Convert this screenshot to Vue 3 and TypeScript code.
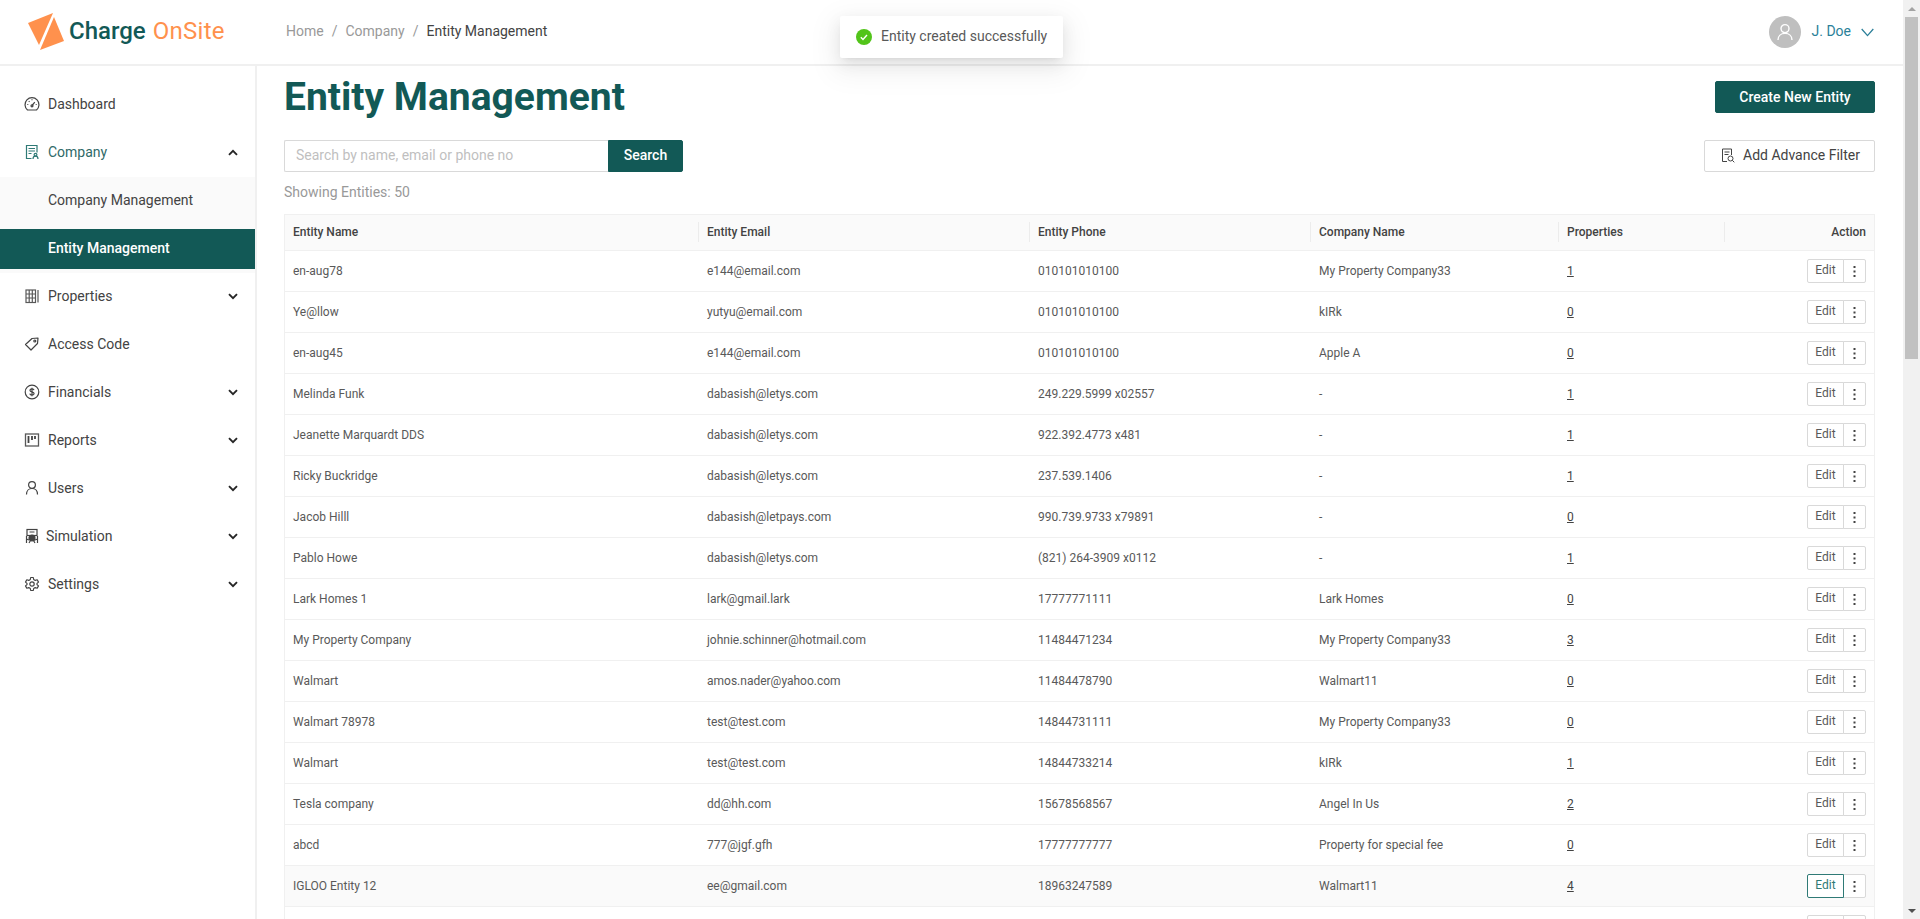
<template>
  <div class="app">
    <div class="page">
      <!-- top bar -->
      <header class="topbar">
        <div class="logo">
          <svg class="logo-mark" width="37" height="40" viewBox="0 0 37 40">
            <polygon points="0,11 25,1 11,33" fill="#ff914d" />
            <polygon points="26,5 36,29 12,38" fill="#ff914d" />
          </svg>
          <span class="logo-text"><b>Charge</b> <i>OnSite</i></span>
        </div>
        <nav class="breadcrumb">
          <span>Home</span><em>/</em><span>Company</span><em>/</em><span class="current">Entity Management</span>
        </nav>
        <div class="user">
          <span class="avatar">
            <svg width="18" height="18" viewBox="0 0 18 18" fill="none" stroke="#fff" stroke-width="1.4">
              <circle cx="9" cy="5.6" r="4" />
              <path d="M2 17c0-4 3-6.600 7-6.600s7 2.600 7 6.600" />
            </svg>
          </span>
          <span class="user-name">J. Doe</span>
          <svg width="13" height="9" viewBox="0 0 13 9" fill="none" stroke="#2b7f99" stroke-width="1.3">
            <path d="M.7 1l5.800 6.600L12.300 1" />
          </svg>
        </div>
      </header>

      <div class="body">
        <!-- side menu -->
        <aside class="sidebar">
          <template v-for="item in menu" :key="item.label">
            <div class="menu-item" :class="{ 'is-open': item.open }">
              <svg class="menu-icon" :class="{ teal: item.open }" width="16" height="16" viewBox="0 0 16 16" fill="none" stroke="currentColor" stroke-width="1.2" v-html="item.icon"></svg>
              <span class="menu-label" :class="{ narrow: item.label === 'Simulation' }">{{ item.label }}</span>
              <svg v-if="item.arrow" class="menu-arrow" :class="{ up: item.open }" width="10" height="7" viewBox="0 0 10 7" fill="none" stroke="#262626" stroke-width="1.9">
                <path d="M1 1.200l4 4 4-4" />
              </svg>
            </div>
            <div v-if="item.open" class="submenu">
              <div class="sub-item">Company Management</div>
              <div class="sub-item active">Entity Management</div>
            </div>
          </template>
        </aside>

        <main class="content">
          <div class="title-row">
            <h1>Entity Management</h1>
            <button class="btn primary create">Create New Entity</button>
          </div>

          <div class="search-row">
            <div class="search">
              <input type="text" placeholder="Search by name, email or phone no" />
              <button class="btn primary">Search</button>
            </div>
            <button class="btn filter">
              <svg width="14" height="15" viewBox="0 0 14 15" fill="none" stroke="#434343" stroke-width="1">
                <path d="M6 13.500H1.500V1h9v6" />
                <path d="M3.500 4h5M3.500 6.500h4" />
                <circle cx="9.500" cy="10.500" r="2.500" />
                <path d="M11.300 12.300l2 2" />
              </svg>
              Add Advance Filter
            </button>
          </div>

          <div class="showing">Showing Entities: 50</div>

          <table class="grid">
            <colgroup>
              <col style="width: 414px" />
              <col style="width: 331px" />
              <col style="width: 281px" />
              <col style="width: 248px" />
              <col style="width: 166px" />
              <col style="width: 150px" />
            </colgroup>
            <thead>
              <tr>
                <th>Entity Name</th>
                <th>Entity Email</th>
                <th>Entity Phone</th>
                <th>Company Name</th>
                <th>Properties</th>
                <th class="action">Action</th>
              </tr>
            </thead>
            <tbody>
              <tr v-for="(row, i) in rows" :key="i" :class="{ hovered: i === 15 }">
                <td>{{ row.name }}</td>
                <td>{{ row.email }}</td>
                <td>{{ row.phone }}</td>
                <td>{{ row.company }}</td>
                <td><a class="count">{{ row.props }}</a></td>
                <td class="action">
                  <div class="edit-group">
                    <button class="edit">Edit</button>
                    <button class="more">
                      <svg width="3" height="11" viewBox="0 0 3 11" fill="#434343">
                        <rect x=".5" y="0" width="2" height="2" />
                        <rect x=".5" y="4.500" width="2" height="2" />
                        <rect x=".5" y="9" width="2" height="2" />
                      </svg>
                    </button>
                  </div>
                </td>
              </tr>
            </tbody>
          </table>
        </main>
      </div>
    </div>

    <!-- scrollbar -->
    <div class="scrollbar">
      <span class="sb-arrow"><i class="tri up"></i></span>
      <span class="sb-thumb"></span>
      <span class="sb-space"></span>
      <span class="sb-arrow"><i class="tri"></i></span>
    </div>

    <!-- toast -->
    <div class="toast">
      <svg width="16" height="16" viewBox="0 0 16 16">
        <circle cx="8" cy="8" r="8" fill="#52c41a" />
        <path d="M4.800 8.200l2.200 2.200 4-4.400" fill="none" stroke="#fff" stroke-width="1.400" />
      </svg>
      <span>Entity created successfully</span>
    </div>
  </div>
</template>

<script setup lang="ts">
interface MenuItem {
  label: string
  icon: string
  arrow?: boolean
  open?: boolean
}

interface EntityRow {
  name: string
  email: string
  phone: string
  company: string
  props: string
}

const menu: MenuItem[] = [
  {
    label: 'Dashboard',
    icon: '<path d="M3.500 14a7 7 0 1 1 9 0z"/><path d="M8 9.500l2.800-3.300M3.300 8.500h1M11.700 8.500h1M8 3.300v1M4.800 5.200l.7.700"/><circle cx="8" cy="9.800" r="1"/>'
  },
  {
    label: 'Company',
    open: true,
    arrow: true,
    icon: '<path d="M7.500 14.500h-5V1.500h10.500v7"/><path d="M4.500 4.500h6.500M4.500 7h6.500M4.500 9.500h3"/><circle cx="11.500" cy="10.800" r="1.400"/><path d="M9 15c0-1.800 1-2.800 2.500-2.800S14 13.200 14 15"/>'
  },
  {
    label: 'Properties',
    arrow: true,
    icon: '<rect x="2" y="2" width="9.500" height="12.500" stroke="#595959"/><path d="M2 6h9.500M2 10h9.500M5.200 2v12.500M8.300 2v12.500M14 2v12.500" stroke="#595959"/>'
  },
  {
    label: 'Access Code',
    icon: '<path d="M1.500 8.500L8 2.500l6-.5-.5 5.500-6.500 6.500z" stroke-linejoin="round"/><circle cx="10.800" cy="5" r="1"/>'
  },
  {
    label: 'Financials',
    arrow: true,
    icon: '<circle cx="8" cy="8" r="6.800"/><path d="M10 6.200C9.800 5.200 9 4.900 8 4.900c-1.200 0-2 .6-2 1.500 0 2 4.100 1.100 4.100 3.200 0 1-.9 1.500-2.100 1.500-1.100 0-2-.5-2.200-1.500M8 3.800v8.400"/>'
  },
  {
    label: 'Reports',
    arrow: true,
    icon: '<rect x="1.500" y="2" width="13" height="12" stroke="#595959" stroke-width="1.300"/><path d="M4.500 4v7M8 4v4M11 4v3" stroke-width="1.800"/>'
  },
  {
    label: 'Users',
    arrow: true,
    icon: '<circle cx="8" cy="5" r="3.400"/><path d="M2.500 14.500c0-3.800 2.300-6 5.500-6s5.500 2.200 5.500 6"/>'
  },
  {
    label: 'Simulation',
    arrow: true,
    icon: '<rect x="3" y="1.500" width="10" height="6"/><circle cx="8" cy="10" r="3" fill="currentColor"/><path d="M5.500 4h5M2.500 8v7M13.500 8v7M2.500 11l2.500 1M13.500 11l-2.500 1M5 15l1.500-2.500M11 15l-1.500-2.500"/>'
  },
  {
    label: 'Settings',
    arrow: true,
    icon: '<path d="M6.700 1.500h2.600l.4 2 1.500.9 2-.6 1.300 2.300-1.500 1.300v1.200l1.500 1.300-1.300 2.300-2-.6-1.500.9-.4 2H6.700l-.4-2-1.500-.9-2 .6-1.300-2.300 1.500-1.300V7.400L1.500 6.100l1.300-2.300 2 .6 1.500-.9z" stroke-linejoin="round"/><circle cx="8" cy="8" r="2.200"/>'
  }
]

const rows: EntityRow[] = [
  { name: 'en-aug78', email: 'e144@email.com', phone: '010101010100', company: 'My Property Company33', props: '1' },
  { name: 'Ye@llow', email: 'yutyu@email.com', phone: '010101010100', company: 'kIRk', props: '0' },
  { name: 'en-aug45', email: 'e144@email.com', phone: '010101010100', company: 'Apple A', props: '0' },
  { name: 'Melinda Funk', email: 'dabasish@letys.com', phone: '249.229.5999 x02557', company: '-', props: '1' },
  { name: 'Jeanette Marquardt DDS', email: 'dabasish@letys.com', phone: '922.392.4773 x481', company: '-', props: '1' },
  { name: 'Ricky Buckridge', email: 'dabasish@letys.com', phone: '237.539.1406', company: '-', props: '1' },
  { name: 'Jacob Hilll', email: 'dabasish@letpays.com', phone: '990.739.9733 x79891', company: '-', props: '0' },
  { name: 'Pablo Howe', email: 'dabasish@letys.com', phone: '(821) 264-3909 x0112', company: '-', props: '1' },
  { name: 'Lark Homes 1', email: 'lark@gmail.lark', phone: '17777771111', company: 'Lark Homes', props: '0' },
  { name: 'My Property Company', email: 'johnie.schinner@hotmail.com', phone: '11484471234', company: 'My Property Company33', props: '3' },
  { name: 'Walmart', email: 'amos.nader@yahoo.com', phone: '11484478790', company: 'Walmart11', props: '0' },
  { name: 'Walmart 78978', email: 'test@test.com', phone: '14844731111', company: 'My Property Company33', props: '0' },
  { name: 'Walmart', email: 'test@test.com', phone: '14844733214', company: 'kIRk', props: '1' },
  { name: 'Tesla company', email: 'dd@hh.com', phone: '15678568567', company: 'Angel In Us', props: '2' },
  { name: 'abcd', email: '777@jgf.gfh', phone: '17777777777', company: 'Property for special fee', props: '0' },
  { name: 'IGLOO Entity 12', email: 'ee@gmail.com', phone: '18963247589', company: 'Walmart11', props: '4' },
  { name: '', email: '', phone: '', company: '', props: '' }
]
</script>

<style>
html,
body {
  margin: 0;
  overflow: hidden;
  background: #fff;
}
</style>

<style scoped>
.app {
  position: relative;
  display: flex;
  height: 919px;
  overflow: hidden;
  font-family: Roboto, "Liberation Sans", sans-serif;
  font-size: 14px;
  color: #434343;
  background: #fff;
}

.page {
  flex: 1;
  min-width: 0;
  display: flex;
  flex-direction: column;
}

/* top bar */
.topbar {
  flex: none;
  display: flex;
  align-items: center;
  height: 64px;
  border-bottom: 2px solid #f0f0f0;
  padding-right: 29px;
}

.logo {
  width: 286px;
  flex: none;
  display: flex;
  align-items: center;
  padding-left: 28px;
  box-sizing: border-box;
}

.logo-mark {
  flex: none;
  margin-right: 4px;
}

.logo-text {
  font-size: 24px;
  line-height: 32px;
  padding-bottom: 2px;
  white-space: nowrap;
}

.logo-text b {
  font-weight: 500;
  color: #125956;
}

.logo-text i {
  font-style: normal;
  font-weight: 400;
  margin-left: 1px;
  letter-spacing: 0.3px;
  color: #ff914d;
}

.breadcrumb {
  flex: 1;
  padding-bottom: 2px;
  color: #999;
}

.breadcrumb em {
  font-style: normal;
  margin: 0 8px;
}

.breadcrumb .current {
  color: #434343;
}

.user {
  display: flex;
  align-items: center;
}

.avatar {
  width: 32px;
  height: 32px;
  border-radius: 50%;
  background: #bfbfbf;
  display: flex;
  align-items: center;
  justify-content: center;
  margin-right: 11px;
}

.user-name {
  color: #2b7f99;
  margin-right: 10px;
  padding-bottom: 2px;
}

/* side menu */
.body {
  flex: 1;
  min-height: 0;
  display: flex;
}

.sidebar {
  flex: none;
  width: 257px;
  box-sizing: border-box;
  border-right: 2px solid #f0f0f0;
  padding-top: 18px;
}

.menu-item {
  display: flex;
  align-items: center;
  height: 40px;
  margin-bottom: 8px;
  padding: 0 17px 0 24px;
}

.menu-item.is-open {
  margin-bottom: 5px;
  color: #2f6a68;
}

.menu-icon {
  flex: none;
  margin-right: 8px;
  color: #434343;
}

.menu-icon.teal {
  color: #2f7a76;
}

.menu-label {
  flex: 1;
}

.menu-label.narrow {
  margin-left: -2px;
}

.menu-arrow.up {
  transform: rotate(180deg);
}

.submenu {
  display: flex;
  flex-direction: column;
  gap: 9px;
  padding: 3px 0 4px;
  margin-bottom: 3px;
  background: #fafafa;
}

.sub-item {
  height: 40px;
  line-height: 40px;
  padding-left: 48px;
}

.sub-item.active {
  line-height: 38px;
  background: #125956;
  color: #fff;
  font-weight: 500;
}

/* main */
.content {
  flex: 1;
  min-width: 0;
  padding: 15px 28px 0 27px;
}

.title-row,
.search-row {
  display: flex;
  justify-content: space-between;
  align-items: center;
}

.title-row {
  height: 32px;
}

h1 {
  margin: 0;
  font-size: 39px;
  line-height: 32px;
  font-weight: 700;
  color: #125956;
}

.btn {
  height: 32px;
  box-sizing: border-box;
  border: 1px solid #d9d9d9;
  border-radius: 2px;
  background: #fff;
  color: #434343;
  font-family: inherit;
  font-size: 14px;
  padding: 0;
}

.btn.primary {
  background: #125956;
  border-color: #125956;
  color: #fff;
  font-weight: 500;
  width: 75px;
}

.btn.create {
  width: 160px;
}

.search-row {
  margin-top: 27px;
}

.search {
  display: flex;
}

.search input {
  width: 324px;
  height: 32px;
  box-sizing: border-box;
  border: 1px solid #d9d9d9;
  border-right: 0;
  border-radius: 2px 0 0 2px;
  padding: 0 11px 2px;
  font-family: inherit;
  font-size: 14px;
  outline: none;
}

.search input::placeholder {
  color: #bfbfbf;
}

.search .btn {
  border-radius: 0 2px 2px 0;
  padding-bottom: 2px;
}

.btn.filter {
  width: 171px;
  display: flex;
  align-items: center;
  gap: 8px;
  padding: 0 0 2px 16px;
}

.showing {
  margin-top: 9px;
  line-height: 22px;
  color: #999;
}

/* table */
.grid {
  width: 1591px;
  margin-top: 11px;
  table-layout: fixed;
  border-collapse: separate;
  border-spacing: 0;
  border-top: 1px solid #f0f0f0;
  border-left: 1px solid #f0f0f0;
  font-size: 12px;
}

.grid th {
  position: relative;
  height: 36px;
  box-sizing: border-box;
  padding: 0 8px 1px;
  background: #fafafa;
  border-bottom: 1px solid #f0f0f0;
  text-align: left;
  font-weight: 500;
  color: #434343;
}

.grid th + th::before {
  content: "";
  position: absolute;
  left: -1px;
  top: 7px;
  width: 1px;
  height: 20px;
  background: #ececec;
}

.grid td {
  height: 41px;
  box-sizing: border-box;
  padding: 0 8px;
  border-bottom: 1px solid #f0f0f0;
  color: #595959;
}

.grid tr.hovered td {
  background: #fafafa;
}

.grid .action {
  text-align: right;
  padding-right: 8px;
  border-right: 1px solid #f0f0f0;
}

.count {
  color: #434343;
  text-decoration: underline;
}

.edit-group {
  display: inline-flex;
  vertical-align: middle;
}

.edit-group button {
  height: 24px;
  box-sizing: border-box;
  border: 1px solid #d9d9d9;
  background: #fff;
  padding: 0;
  font-family: inherit;
  font-size: 12px;
  color: #595959;
}

.edit-group .edit {
  width: 37px;
  padding-bottom: 2px;
  border-radius: 2px 0 0 2px;
}

.more {
  width: 23px;
  margin-left: -1px;
  border-radius: 0 2px 2px 0;
  display: flex;
  align-items: center;
  justify-content: center;
}

.hovered .edit-group .edit {
  position: relative;
  border-color: #2f7a76;
  color: #2f7a76;
}

/* scrollbar */
.scrollbar {
  flex: none;
  width: 17px;
  display: flex;
  flex-direction: column;
  background: #f1f1f1;
}

.sb-arrow {
  flex: none;
  height: 17px;
  display: flex;
  align-items: center;
  justify-content: center;
}

.tri {
  width: 0;
  height: 0;
  border-left: 4px solid transparent;
  border-right: 4px solid transparent;
  border-top: 4px solid #505050;
}

.tri.up {
  border-top: 0;
  border-bottom: 4px solid #a3a3a3;
}

.sb-thumb {
  flex: none;
  height: 342px;
  margin: 0 2px;
  background: #c1c1c1;
}

.sb-space {
  flex: 1;
}

/* toast */
.toast {
  position: absolute;
  left: 840px;
  top: 16px;
  height: 42px;
  box-sizing: border-box;
  padding: 0 16px 2px;
  display: flex;
  align-items: center;
  gap: 9px;
  background: #fff;
  border-radius: 2px;
  color: #595959;
  box-shadow: 0 3px 6px -4px rgba(0, 0, 0, 0.12), 0 6px 16px 0 rgba(0, 0, 0, 0.08), 0 9px 28px 8px rgba(0, 0, 0, 0.05);
}

.toast svg {
  margin-top: 2px;
}
</style>
